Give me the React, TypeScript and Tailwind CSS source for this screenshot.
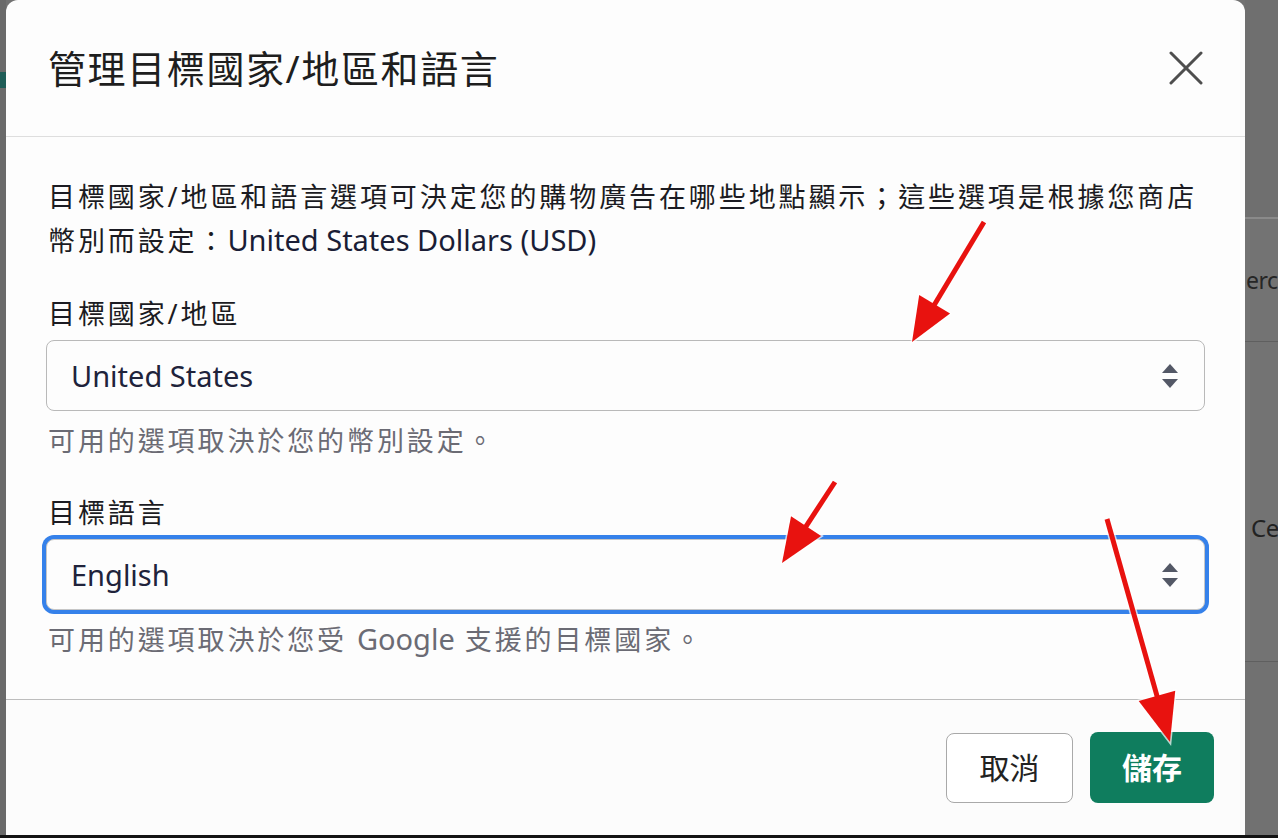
import React from "react";

type Pt = [number, number];

function arrowGeom(from: Pt, tip: Pt, headLen: number, halfW: number) {
  const dx = tip[0] - from[0];
  const dy = tip[1] - from[1];
  const len = Math.hypot(dx, dy);
  const ux = dx / len;
  const uy = dy / len;
  const bx = tip[0] - ux * headLen;
  const by = tip[1] - uy * headLen;
  const px = -uy;
  const py = ux;
  const pts = `${tip[0]},${tip[1]} ${bx + px * halfW},${by + py * halfW} ${bx - px * halfW},${by - py * halfW}`;
  return { sx: from[0], sy: from[1], ex: bx + ux * 4, ey: by + uy * 4, pts };
}

const arrows = [
  arrowGeom([984, 222], [912, 342], 44, 18),
  arrowGeom([835, 482], [782, 563], 44, 18),
  arrowGeom([1107, 519], [1170, 742], 48, 19),
];

function Chevrons() {
  return (
    <svg width="16" height="26" viewBox="0 0 16 26" aria-hidden="true">
      <polygon points="8,1 16,10 0,10" fill="#535866" />
      <polygon points="0,16 16,16 8,25" fill="#535866" />
    </svg>
  );
}

function Latin({ children }: { children: React.ReactNode }) {
  return <span className="tracking-normal text-[29px]">{children}</span>;
}

export default function App() {
  return (
    <div className="relative w-[1278px] h-[838px] overflow-hidden bg-[#727272] flex flex-col font-['Noto_Sans','Noto_Sans_CJK_TC',sans-serif]">
      <div className="flex h-[835px]">
        {/* left backdrop strip */}
        <div className="w-[6px] bg-[#6a6a6a] flex flex-col">
          <div className="h-[72px]" />
          <div className="h-[16px] bg-[#1f5d57]" />
        </div>

        {/* modal */}
        <div className="w-[1239px] bg-[#fdfdfd] rounded-t-[12px] flex flex-col">
          <div className="h-[137px] border-b border-[#dedede] flex items-center justify-between pl-[42px] pr-[42px]">
            <h1 className="text-[38px] leading-[48px] tracking-[1.6px] text-[#1e1e1e] font-normal">
              管理目標國家/地區和語言
            </h1>
            <svg width="34" height="34" viewBox="0 0 34 34" aria-hidden="true">
              <line x1="2" y1="2" x2="32" y2="32" stroke="#4e4e4e" strokeWidth="3" strokeLinecap="round" />
              <line x1="32" y1="2" x2="2" y2="32" stroke="#4e4e4e" strokeWidth="3" strokeLinecap="round" />
            </svg>
          </div>

          <div className="flex-1 px-[40px] pt-[38px] flex flex-col">
            <div className="pl-[2px] text-[27px] leading-[43px] tracking-[2.9px] text-[#1b1b22]">
              <div className="whitespace-nowrap">目標國家/地區和語言選項可決定您的購物廣告在哪些地點顯示；這些選項是根據您商店</div>
              <div className="whitespace-nowrap">
                幣別而設定：<span className="tracking-normal text-[29px] font-normal text-[#1a1d36]">United States Dollars (USD)</span>
              </div>
            </div>

            <div className="mt-[34px] pl-[2px] text-[27px] leading-[36px] tracking-[2.9px] text-[#1b1b22]">目標國家/地區</div>
            <div className="mt-[8px] h-[71px] border border-[#b9b9b9] rounded-[8px] bg-[#fdfdfd] flex items-center justify-between pl-[24px] pr-[26px]">
              <span className="text-[29px] text-[#20233b]">United States</span>
              <Chevrons />
            </div>
            <div className="mt-[12px] pl-[2px] text-[27px] leading-[36px] tracking-[2.9px] text-[#6b6b74]">可用的選項取決於您的幣別設定。</div>

            <div className="mt-[36px] pl-[2px] text-[27px] leading-[36px] tracking-[2.9px] text-[#1b1b22]">目標語言</div>
            <div className="mt-[8px] h-[71px] border border-[#c6c6c6] rounded-[8px] bg-[#fdfdfd] ring-[4px] ring-[#3581ea] flex items-center justify-between pl-[24px] pr-[26px]">
              <span className="text-[29px] text-[#20233b]">English</span>
              <Chevrons />
            </div>
            <div className="mt-[11px] pl-[2px] text-[27px] leading-[36px] tracking-[2.9px] text-[#6b6b74] whitespace-nowrap">
              可用的選項取決於您受 <Latin>Google</Latin> 支援的目標國家。
            </div>
          </div>

          <div className="h-[136px] border-t border-[#bdbdbd] bg-[#fcfcfc] flex items-center justify-end gap-[17px] pr-[31px]">
            <button className="w-[127px] h-[70px] border border-[#a9a9a9] rounded-[8px] bg-white text-[30px] text-[#222] flex items-center justify-center">
              取消
            </button>
            <button className="w-[124px] h-[71px] rounded-[8px] bg-[#0f7d5e] text-[30px] font-bold text-white flex items-center justify-center">
              儲存
            </button>
          </div>
        </div>

        {/* right backdrop strip */}
        <div className="flex-1 flex flex-col overflow-hidden bg-[#737373]">
          <div className="h-[217px] bg-[#6f6f6f]" />
          <div className="h-[2px] bg-[#8a8a8a]" />
          <div className="h-[122px] flex items-center pl-[1px] text-[23px] tracking-[-0.5px] text-[#262626] whitespace-nowrap">erc</div>
          <div className="h-[1px] bg-[#5f5f5f]" />
          <div className="h-[319px] flex flex-col">
            <div className="h-[170px]" />
            <div className="pl-[6px] text-[24px] leading-[32px] tracking-[-0.5px] text-[#222] whitespace-nowrap">Ce</div>
          </div>
          <div className="h-[1px] bg-[#5f5f5f]" />
          <div className="flex-1 bg-[#717171]" />
        </div>
      </div>
      <div className="h-[3px] bg-[#141414]" />

      {/* annotation arrows */}
      <svg className="absolute inset-0 pointer-events-none" width="1278" height="838" viewBox="0 0 1278 838" aria-hidden="true">
        {arrows.map((a, i) => (
          <g key={i}>
            <line x1={a.sx} y1={a.sy} x2={a.ex} y2={a.ey} stroke="#ffffff" strokeOpacity="0.7" strokeWidth="8" />
            <polygon points={a.pts} fill="#ffffff" fillOpacity="0.7" stroke="#ffffff" strokeOpacity="0.7" strokeWidth="3" />
            <line x1={a.sx} y1={a.sy} x2={a.ex} y2={a.ey} stroke="#e8120f" strokeWidth="5" />
            <polygon points={a.pts} fill="#e8120f" />
          </g>
        ))}
      </svg>
    </div>
  );
}
